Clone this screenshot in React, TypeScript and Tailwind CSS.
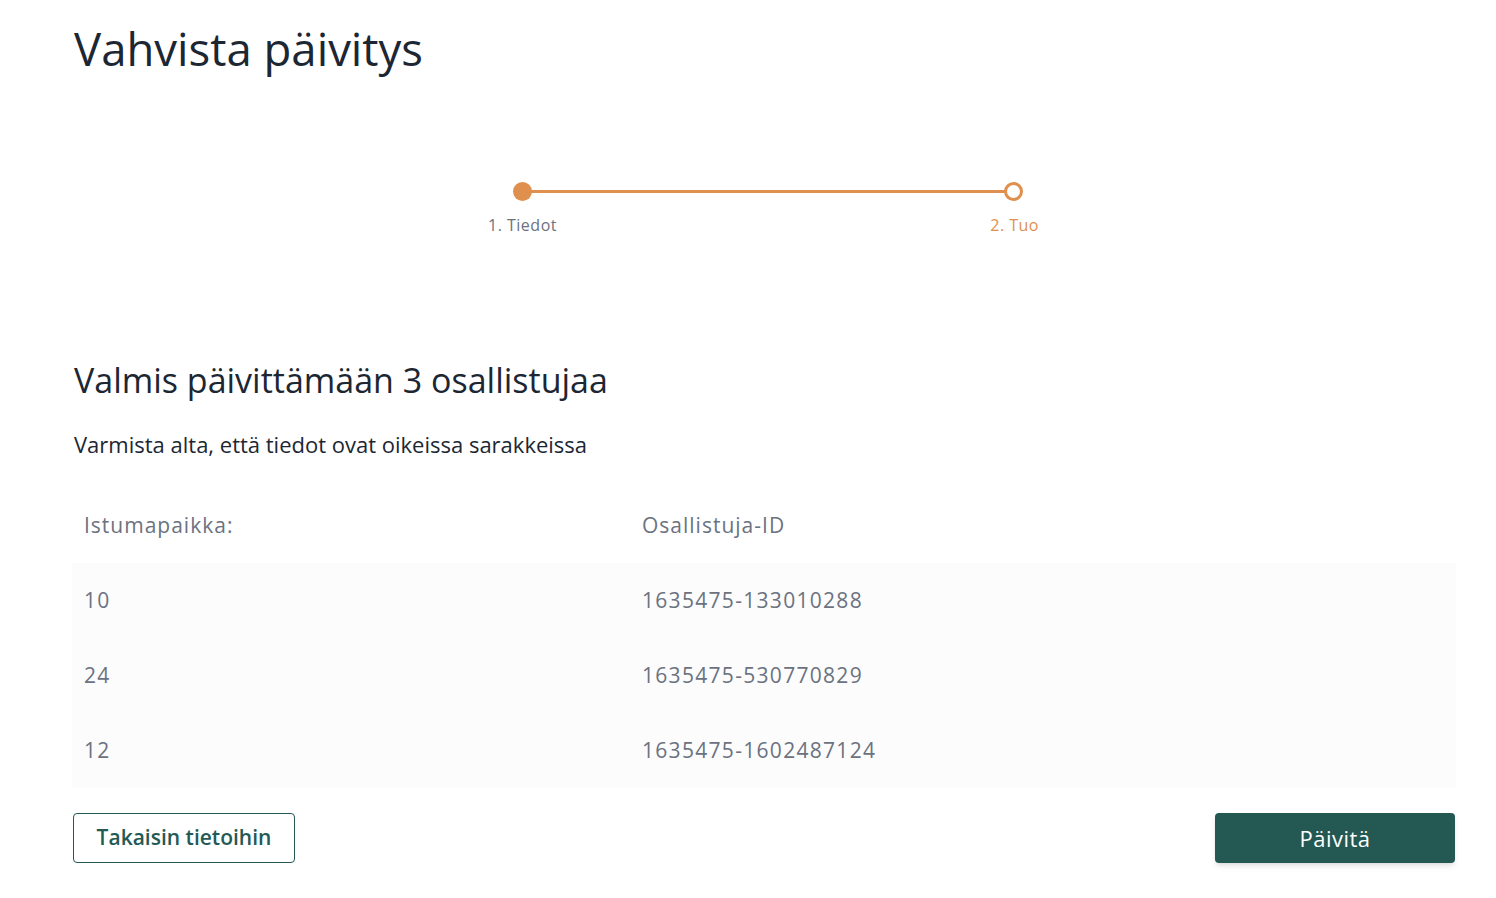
import React from "react";

const rows = [
  { seat: "10", id: "1635475-133010288" },
  { seat: "24", id: "1635475-530770829" },
  { seat: "12", id: "1635475-1602487124" },
];

const Stepper: React.FC = () => (
  <div className="flex justify-center pl-[6px] mr-[-34px] h-[284px] pt-[106px]">
    <div className="relative w-[492px] h-[60px]">
      {/* line */}
      <div className="absolute left-0 right-0 top-[8px] h-[3px] bg-[#e0904e]" />
      <div className="absolute left-[-9px] top-0 w-[19px] h-[19px] rounded-full bg-[#e0904e]" />
      <div className="absolute right-[-9px] top-0 w-[19px] h-[19px] rounded-full border-[3px] border-[#e0904e] bg-white" />
      <span className="absolute left-[-34px] top-[33px] text-[16px] leading-[20px] tracking-[0.5px] text-[#6b7280]">1. Tiedot</span>
      <span className="absolute right-[-25px] top-[33px] text-[16px] leading-[20px] tracking-[0.5px] text-[#e0904e]">2. Tuo</span>
    </div>
  </div>
);

export default function App() {
  return (
    <div className="min-h-screen bg-white px-[74px] pt-[20px] text-[#1c2733]" style={{ fontFamily: "'Open Sans', 'Noto Sans', sans-serif" }}>
      <h1 className="text-[45.5px] leading-[56px] font-normal">Vahvista päivitys</h1>

      <Stepper />

      <h2 className="h-[40px] text-[34px] leading-[40px] font-normal">Valmis päivittämään 3 osallistujaa</h2>
      <p className="mt-[30px] h-[28px] text-[22px] leading-[28px]">Varmista alta, että tiedot ovat oikeissa sarakkeissa</p>

      <div className="mt-[30px] -ml-[2px] mr-[-34px] text-[#6b7280] text-[21px]">
        <div className="grid grid-cols-[558px_1fr] h-[75px] items-center px-[12px] font-medium tracking-[1px] bg-white">
          <span>Istumapaikka:</span>
          <span>Osallistuja-ID</span>
        </div>
        <div className="bg-[#fcfcfc]">
          {rows.map((r) => (
            <div key={r.id} className="grid grid-cols-[558px_1fr] h-[75px] items-center px-[12px] tracking-[1.3px]">
              <span>{r.seat}</span>
              <span>{r.id}</span>
            </div>
          ))}
        </div>
      </div>

      <div className="mt-[25px] flex justify-between items-center mr-[-33px] -ml-[1px]">
        <button className="h-[50px] w-[222px] rounded-[4px] border border-[#245a55] text-[#245a55] text-[21px] font-semibold bg-white">
          Takaisin tietoihin
        </button>
        <button className="h-[50px] w-[240px] rounded-[4px] bg-[#245953] text-white text-[22px] font-medium tracking-[0.5px] shadow-md">
          Päivitä
        </button>
      </div>
    </div>
  );
}
